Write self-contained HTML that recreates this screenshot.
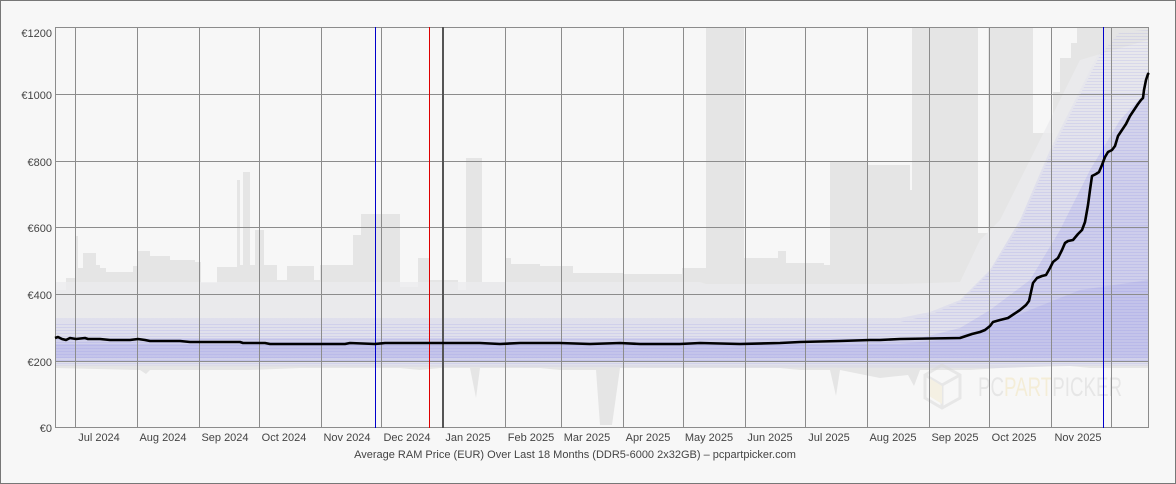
<!DOCTYPE html>
<html><head><meta charset="utf-8"><style>
html,body{margin:0;padding:0;background:#f7f7f7;}
body{width:1176px;height:484px;overflow:hidden;}
svg{display:block;font-family:"Liberation Sans",Arial,sans-serif;}
</style></head><body>
<svg width="1176" height="484" viewBox="0 0 1176 484" xmlns="http://www.w3.org/2000/svg">
<defs>
<pattern id="hl" width="6" height="3" patternUnits="userSpaceOnUse">
<rect x="0" y="0" width="6" height="1" fill="rgba(80,80,225,0.10)"/>
</pattern>
<linearGradient id="bg1" x1="0" y1="0" x2="0" y2="1">
<stop offset="0" stop-color="rgba(120,120,235,0)"/>
<stop offset="0.6" stop-color="rgba(120,120,235,0.12)"/>
<stop offset="1" stop-color="rgba(120,120,235,0.08)"/>
</linearGradient>
</defs>
<rect x="0.5" y="0.5" width="1175" height="483" fill="#f7f7f7" stroke="#777"/>
<path fill="#e5e5e5" d="M55,368 L55,290 L66,290 L66,278 L75,278 L75,236 L78,236 L78,268 L83,268 L83,253 L96,253 L96,265 L100,265 L100,268 L106,268 L106,272 L133,272 L133,266 L137,266 L137,251 L150,251 L150,256 L170,256 L170,260 L195,260 L195,262 L201,262 L201,283 L217,283 L217,267 L237,267 L237,180 L240,180 L240,265 L243,265 L243,172 L250,172 L250,265 L255,265 L255,230 L264,230 L264,265 L277,265 L277,280 L287,280 L287,266 L314,266 L314,280 L320,280 L320,265 L353,265 L353,235 L361,235 L361,214 L400,214 L400,287 L418,287 L418,258 L430,258 L430,280 L458,280 L458,290 L466,290 L466,158 L482,158 L482,282 L505,282 L505,258 L511,258 L511,264 L540,264 L540,266 L573,266 L573,273 L623,273 L623,274 L682,274 L682,268 L706,268 L706,27 L744,27 L744,258 L778,258 L778,251 L786,251 L786,263 L824,263 L824,265 L830,265 L830,162 L868,162 L868,165 L910,165 L910,190 L912,190 L912,27 L978,27 L978,233 L988,233 L988,27 L1033,27 L1033,133 L1053,133 L1053,92 L1060,92 L1060,58 L1071,58 L1071,43 L1077,43 L1077,27 L1148,27 L1148,368 L1090,368 L1070,366 L1000,368 L970,370 L930,370 L920,370 L914,386 L908,375 L880,378 L840,370 L836,396 L830,370 L800,370 L780,368 L620,368 L612,425 L600,425 L596,370 L560,370 L540,368 L480,368 L476,398 L470,368 L440,368 L420,370 L400,368 L300,368 L250,370 L150,370 L146,374 L140,370 L55,368 Z"/>
<path fill="#ebebed" d="M55,282 L700,282 L706,284 L900,284 L960,282 L980,240 L1000,220 L1030,160 L1060,100 L1080,60 L1148,40 L1148,365 L55,365 Z" opacity="0.8"/>
<path fill="url(#bg1)" d="M55,318 L900,318 L930,312 L960,300 L990,270 L1020,220 L1050,150 L1080,90 L1100,50 L1120,30 L1148,28 L1148,366 L1050,366 L1000,368 L55,366 Z"/>
<path fill="url(#hl)" d="M55,322 L900,322 L930,315 L960,302 L990,272 L1020,225 L1050,155 L1080,95 L1100,55 L1120,32 L1148,30 L1148,364 L55,364 Z"/>
<path fill="rgba(100,100,230,0.12)" d="M55,338 L920,338 L960,328 L990,310 L1030,280 L1060,230 L1090,170 L1120,120 L1148,90 L1148,362 L55,362 Z"/>
<path fill="rgba(100,100,230,0.10)" d="M55,344 L900,344 L940,340 L980,330 L1030,310 L1080,290 L1148,280 L1148,358 L55,358 Z"/>
<g opacity="0.5">
<path d="M925,375 L942,365 L960,375 L960,398 L942,408 L925,398 Z M925,375 L942,385 L960,375 M942,385 L942,408" fill="none" stroke="#d8d8d8" stroke-width="3"/>
<path d="M929,378 L942,386 L942,404 L929,396 Z" fill="#f3ead0"/>
<text x="978" y="396" font-size="27" fill="#d6d6d6" textLength="144" lengthAdjust="spacingAndGlyphs">PC<tspan fill="#f2e4b8">PART</tspan>PICKER</text>
</g>
<g stroke="#8c8c8c" stroke-width="1">
<line x1="55" y1="27.5" x2="1149" y2="27.5"/>
<line x1="55" y1="94.5" x2="1149" y2="94.5"/>
<line x1="55" y1="161.5" x2="1149" y2="161.5"/>
<line x1="55" y1="227.5" x2="1149" y2="227.5"/>
<line x1="55" y1="294.5" x2="1149" y2="294.5"/>
<line x1="55" y1="361.5" x2="1149" y2="361.5"/>
<line x1="55" y1="427.5" x2="1149" y2="427.5"/>
<line x1="55.5" y1="27" x2="55.5" y2="428"/>
<line x1="1148.5" y1="27" x2="1148.5" y2="428"/>
<line x1="75.5" y1="27" x2="75.5" y2="428"/>
<line x1="137.5" y1="27" x2="137.5" y2="428"/>
<line x1="199.5" y1="27" x2="199.5" y2="428"/>
<line x1="259.5" y1="27" x2="259.5" y2="428"/>
<line x1="321.5" y1="27" x2="321.5" y2="428"/>
<line x1="381.5" y1="27" x2="381.5" y2="428"/>
<line x1="505.5" y1="27" x2="505.5" y2="428"/>
<line x1="561.5" y1="27" x2="561.5" y2="428"/>
<line x1="623.5" y1="27" x2="623.5" y2="428"/>
<line x1="683.5" y1="27" x2="683.5" y2="428"/>
<line x1="745.5" y1="27" x2="745.5" y2="428"/>
<line x1="805.5" y1="27" x2="805.5" y2="428"/>
<line x1="867.5" y1="27" x2="867.5" y2="428"/>
<line x1="929.5" y1="27" x2="929.5" y2="428"/>
<line x1="989.5" y1="27" x2="989.5" y2="428"/>
<line x1="1051.5" y1="27" x2="1051.5" y2="428"/>
<line x1="1111.5" y1="27" x2="1111.5" y2="428"/>
</g>
<line x1="443" y1="27" x2="443" y2="428" stroke="#555" stroke-width="2"/>
<line x1="429.5" y1="27" x2="429.5" y2="428" stroke="#d00" stroke-width="1"/>
<line x1="375.5" y1="27" x2="375.5" y2="428" stroke="#0000cc" stroke-width="1"/>
<line x1="1103.5" y1="27" x2="1103.5" y2="428" stroke="#0000cc" stroke-width="1"/>
<polyline fill="none" stroke="#000" stroke-width="2.6" stroke-linejoin="round" points="55,338 58,337 62,339 66,340 70,338 76,339 85,338 88,339 100,339 110,340 130,340 138,339 145,340 150,341 180,341 190,342 240,342 243,343 250,343 265,343 270,344 300,344 320,344 345,344 350,343 375,344 385,343 430,343 443,343 470,343 480,343 500,344 520,343 560,343 590,344 620,343 640,344 680,344 700,343 740,344 780,343 800,342 840,341 870,340 880,340 900,339 960,338 966,336 972,334 980,332 985,330 990,326 993,322 1000,320 1008,318 1014,314 1020,310 1026,305 1029,301 1033,283 1037,278 1042,276 1046,275 1050,268 1053,262 1058,258 1062,250 1065,243 1068,241 1073,240 1078,234 1082,230 1085,222 1088,205 1090,190 1092,176 1096,174 1099,172 1102,165 1105,157 1108,152 1112,150 1115,146 1118,136 1122,130 1126,124 1130,116 1134,110 1138,104 1141,100 1143,98 1144,90 1146,80 1148,74 1149,73"/>
<g font-size="11" fill="#444" text-anchor="end">
<text x="52" y="37">€1200</text>
<text x="52" y="99">€1000</text>
<text x="52" y="166">€800</text>
<text x="52" y="232">€600</text>
<text x="52" y="299">€400</text>
<text x="52" y="366">€200</text>
<text x="52" y="432">€0</text>
</g>
<g font-size="11" fill="#444" text-anchor="middle">
<text x="99" y="441">Jul 2024</text>
<text x="163" y="441">Aug 2024</text>
<text x="225" y="441">Sep 2024</text>
<text x="284" y="441">Oct 2024</text>
<text x="347" y="441">Nov 2024</text>
<text x="407" y="441">Dec 2024</text>
<text x="468" y="441">Jan 2025</text>
<text x="531" y="441">Feb 2025</text>
<text x="587" y="441">Mar 2025</text>
<text x="648" y="441">Apr 2025</text>
<text x="709" y="441">May 2025</text>
<text x="770" y="441">Jun 2025</text>
<text x="829" y="441">Jul 2025</text>
<text x="893" y="441">Aug 2025</text>
<text x="955" y="441">Sep 2025</text>
<text x="1014" y="441">Oct 2025</text>
<text x="1078" y="441">Nov 2025</text>
<text x="575" y="458">Average RAM Price (EUR) Over Last 18 Months (DDR5-6000 2x32GB) – pcpartpicker.com</text>
</g>
</svg>
</body></html>
